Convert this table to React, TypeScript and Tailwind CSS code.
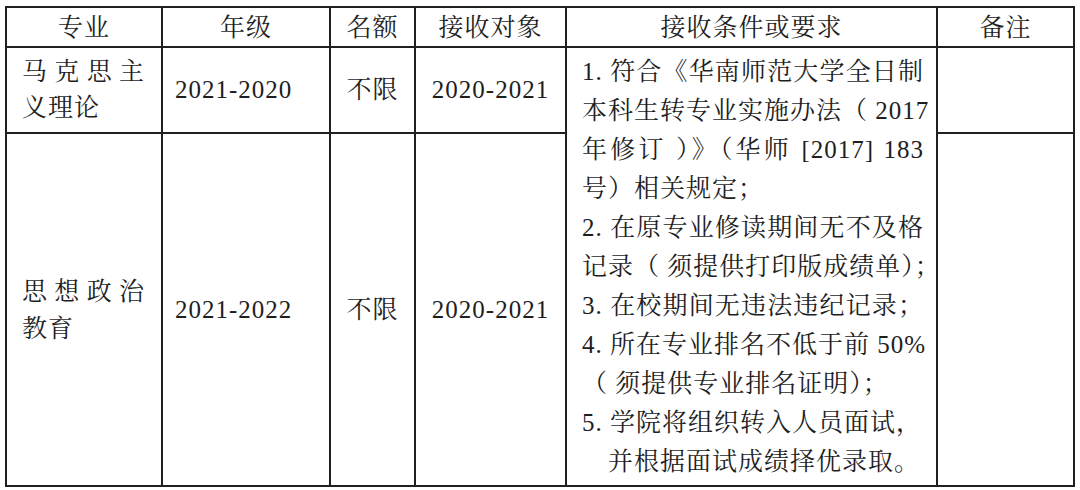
const serif = "font-['Liberation_Serif','Noto_Serif_CJK_SC','Noto_Sans_CJK_SC',serif]";

const conditions: { text: string; full: boolean }[] = [
  { text: '1. 符合《华南师范大学全日制', full: true },
  { text: '本科生转专业实施办法（ 2017', full: true },
  { text: '年修订 ）》（华师 [2017] 183', full: true },
  { text: '号）相关规定；', full: false },
  { text: '2. 在原专业修读期间无不及格', full: true },
  { text: '记录（ 须提供打印版成绩单）；', full: true },
  { text: '3. 在校期间无违法违纪记录；', full: true },
  { text: '4. 所在专业排名不低于前 50%', full: true },
  { text: '（ 须提供专业排名证明）；', full: false },
  { text: '5. 学院将组织转入人员面试，', full: false },
  { text: '并根据面试成绩择优录取。', full: false },
];

const headers = ['专业', '年级', '名额', '接收对象', '接收条件或要求', '备注'];

export default function App() {
  return (
    <div className={`w-[1080px] h-[490px] bg-white pt-[6px] pl-[5px] text-[#1e1e1e] text-[25px] tracking-[1px] ${serif}`}>
      <div className="grid w-[1070px] grid-cols-[154px_166px_83px_149px_369px_135px] grid-rows-[38px_84px_351px] gap-[2px] bg-[#202020] p-[2px]">
        {headers.map((h) => (
          <div key={h} className="flex items-center justify-center bg-white leading-none">
            {h}
          </div>
        ))}

        {/* row 1 */}
        <div className="flex items-center bg-white pl-[15px] pr-[16px]">
          <div className="w-full text-justify leading-[36px]">马克思主义理论</div>
        </div>
        <div className="flex items-center bg-white pl-[12px]">2021-2020</div>
        <div className="flex items-center justify-center bg-white">不限</div>
        <div className="flex items-center justify-center bg-white">2020-2021</div>
        <div className="row-span-2 flex flex-col justify-center bg-white pl-[15px] pr-[12px]">
          {conditions.map((c, i) => (
            <div
              key={i}
              className={`whitespace-pre leading-[39px] ${c.full ? '[text-align-last:justify]' : ''} ${i === 10 ? 'pl-[26px]' : ''}`}
            >
              {c.text}
            </div>
          ))}
        </div>
        <div className="bg-white" />

        {/* row 2 */}
        <div className="flex items-center bg-white pl-[15px] pr-[16px]">
          <div className="w-full text-justify leading-[37px]">思想政治教育</div>
        </div>
        <div className="flex items-center bg-white pl-[12px]">2021-2022</div>
        <div className="flex items-center justify-center bg-white">不限</div>
        <div className="flex items-center justify-center bg-white">2020-2021</div>
        <div className="bg-white" />
      </div>
    </div>
  );
}
